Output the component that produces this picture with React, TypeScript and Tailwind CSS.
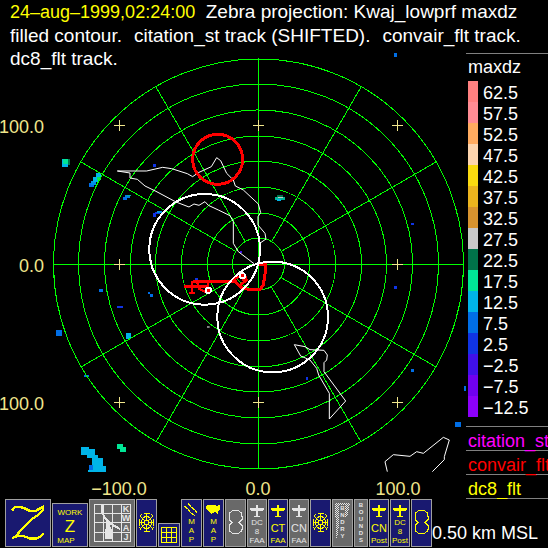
import clsx from 'clsx';
import type { ReactNode } from 'react';

const levels = [
  { value: '62.5', color: 'bg-[#ff8080]' },
  { value: '57.5', color: 'bg-[#ff8c94]' },
  { value: '52.5', color: 'bg-[#ffab60]' },
  { value: '47.5', color: 'bg-[#fdd5ae]' },
  { value: '42.5', color: 'bg-[#fada10]' },
  { value: '37.5', color: 'bg-[#ebb41e]' },
  { value: '32.5', color: 'bg-[#d7932f]' },
  { value: '27.5', color: 'bg-[#c8c8c8]' },
  { value: '22.5', color: 'bg-[#00734a]' },
  { value: '17.5', color: 'bg-[#00e696]' },
  { value: '12.5', color: 'bg-[#00b4e8]' },
  { value: '7.5', color: 'bg-[#006ee6]' },
  { value: '2.5', color: 'bg-[#1034e4]' },
  { value: '−2.5', color: 'bg-[#4010ea]' },
  { value: '−7.5', color: 'bg-[#7000f0]' },
  { value: '−12.5', color: 'bg-[#8c00fa]' },
];

const tracks = [
  { name: 'citation_st', color: 'text-[#ff00ff]' },
  { name: 'convair_flt', color: 'text-[#ff0000]' },
  { name: 'dc8_flt', color: 'text-[#ffff00]' },
];

const rings = [26, 51, 77, 103, 128, 154, 180, 205];
const spokes = [30, 60, 120, 150, 210, 240, 300, 330];

const ticks = [
  [119, 125], [258, 125], [397, 125],
  [119, 264], [397, 264],
  [119, 402], [258, 402], [397, 402],
];

// x, y, width, height, fill (sweep units, a third of a plot unit)
const echoes: [number, number, number, number, string][] = [
  [1032, 9, 9, 12, '#006ee6'],
  [36, 328, 18, 22, '#00b4e8'],
  [40, 326, 16, 16, '#00e696'],
  [54, 327, 6, 18, '#00734a'],
  [309, 342, 9, 9, '#1034e4'],
  [118, 400, 14, 10, '#006ee6'],
  [123, 392, 15, 12, '#0090e8'],
  [130, 382, 14, 14, '#00b4e8'],
  [137, 370, 16, 20, '#00b4e8'],
  [142, 380, 10, 9, '#00e65a'],
  [220, 441, 12, 8, '#006ee6'],
  [225, 436, 14, 9, '#0080e0'],
  [232, 435, 10, 4, '#00b4a0'],
  [310, 488, 8, 12, '#1034e4'],
  [315, 485, 14, 6, '#1034e4'],
  [322, 484, 13, 5, '#0090e0'],
  [676, 440, 30, 9, '#00b496'],
  [682, 435, 18, 6, '#00734a'],
  [684, 440, 14, 5, '#c8c8c8'],
  [680, 447, 14, 5, '#00b4e8'],
  [1083, 519, 9, 6, '#1034e4'],
  [570, 604, 6, 6, '#4010ea'],
  [435, 684, 9, 8, '#1034e4'],
  [1032, 708, 9, 9, '#1034e4'],
  [148, 718, 11, 7, '#006ee6'],
  [294, 726, 7, 6, '#006ee6'],
  [299, 732, 10, 9, '#006ee6'],
  [201, 768, 17, 5, '#1034e4'],
  [18, 840, 18, 18, '#006ee6'],
  [228, 849, 15, 18, '#00b4e8'],
  [103, 975, 14, 6, '#006ee6'],
  [1083, 957, 9, 9, '#006ee6'],
  [768, 981, 6, 9, '#1034e4'],
  [1242, 1008, 6, 15, '#006ee6'],
  [1215, 1116, 18, 15, '#006ee6'],
  [201, 1182, 18, 14, '#00e696'],
  [210, 1190, 18, 15, '#00e696'],
  [93, 1191, 24, 24, '#00b4e8'],
  [111, 1197, 24, 27, '#00b4e8'],
  [126, 1215, 18, 50, '#00b4e8'],
  [140, 1224, 18, 41, '#00b4e8'],
  [156, 1248, 12, 17, '#00b4e8'],
  [114, 1260, 16, 5, '#00b4e8'],
  [117, 1245, 12, 14, '#006ee6'],
];

function Plot() {
  return (
    <svg
      viewBox="0 50 466 448"
      className="block h-auto w-full"
      role="img"
      aria-label="Kwaj_lowprf maxdz filled contour with aircraft tracks"
      shapeRendering="crispEdges"
      fill="none"
    >
      <g transform="translate(50 50) scale(0.33333)">
        {echoes.map(([x, y, w, h, fill]) => (
          <rect key={`${x}-${y}`} x={x} y={y} width={w} height={h} fill={fill} />
        ))}
      </g>

      {/* range rings */}
      <g stroke="#00ff00">
        {rings.map((r) => (
          <circle key={r} cx="258.5" cy="264" r={r} />
        ))}
        {spokes.map((deg) => (
          <path
            key={deg}
            d="M284.500 264.500H463.500"
            transform={`rotate(${deg} 258.500 264.500)`}
          />
        ))}
        <path d="M53 264.500H464M258.500 58V469" />
      </g>

      <g stroke="#f0e68c">
        {ticks.map(([x, y]) => (
          <path key={`${x}-${y}`} d={`M${x - 5} ${y}.5h11M${x}.5 ${y - 5}v11`} />
        ))}
      </g>

      <g transform="translate(50 50) scale(0.33333)" strokeLinejoin="round">
        {/* atoll outlines */}
        <g stroke="#fff" strokeWidth="3">
          <path d="M202 363L240 369V384L262 388L285 408L318 424L378 456L417 471L432 462L447 466L465 455L475 466L505 480L540 497L550 515V580L565 605L612 641" />
          <path d="M202 363H290L338 352L365 356L412 371L428 380L445 368L484 350L500 323L512 332L530 370L550 390L556 408L580 420L625 462L632 488L624 500V525L645 550L648 567L632 578" />
          <path d="M733 884L765 890L780 899L822 901L832 915L830 930L822 938V965L887 1053L838 1107V1030L806 975L800 955L780 930L752 918Z" />
          <path d="M1012 1265L1005 1235L1030 1214L1080 1219L1100 1205L1120 1210L1180 1162L1198 1170L1183 1220V1229L1147 1265" />
          <path d="M471 831h8" />
        </g>

        <g stroke="#ff0000" strokeWidth="9">
          <circle cx="503" cy="328" r="75" />
          <path d="M626 642L648 644L646 665L640 705L630 719L590 717L572 712L555 693L475 696L430 694" />
          <path d="M402 710H475M426 692V732M417 729H435M442 697L447 716L465 725M475 690V718" strokeWidth="7" />
          <path d="M550 690L575 675L580 690L586 678L590 692L575 700L572 712" strokeWidth="7" />
        </g>

        <g stroke="#fff" strokeWidth="6">
          <circle cx="464" cy="598" r="166" />
          <circle cx="668" cy="801" r="166" />
          <circle cx="577" cy="677" r="8" fill="#ff0000" />
          <circle cx="475" cy="721" r="8" fill="#ff0000" />
        </g>
      </g>

      <g fill="#f0e68c" fontSize="18">
        <g textAnchor="end">
          <text x="44" y="133">100.0</text>
          <text x="44" y="272">0.0</text>
          <text x="44" y="410">100.0</text>
        </g>
        <g textAnchor="middle">
          <text x="119" y="495">−100.0</text>
          <text x="258" y="495">0.0</text>
          <text x="398" y="495">100.0</text>
        </g>
      </g>
    </svg>
  );
}

function Legend() {
  return (
    <aside className="w-[82px] shrink-0 overflow-hidden pt-[3px] whitespace-nowrap">
      <h2 className="h-7 border-t border-[#808080] pl-0.5 leading-[27px]">
        maxdz
      </h2>
      <ul>
        {levels.map(({ value, color }) => (
          <li key={value} className="flex h-[21px] gap-[5px] pl-0.5">
            <span className={clsx('w-2.5', color)} />
            <span className="leading-6">{value}</span>
          </li>
        ))}
      </ul>
      <ul className="mt-[9px] border-b border-[#808080]">
        {tracks.map(({ name, color }) => (
          <li
            key={name}
            className={clsx(
              'h-6 border-t border-[#808080] pl-0.5 leading-7',
              color,
            )}
          >
            {name}
          </li>
        ))}
      </ul>
    </aside>
  );
}

function Tool({
  label,
  size = 'h-12 w-5',
  off,
  children,
}: {
  label: string;
  size?: string;
  off?: boolean;
  children: ReactNode;
}) {
  return (
    <button
      type="button"
      aria-label={label}
      className={clsx(
        'flex shrink-0 flex-col items-center overflow-hidden border border-[#a0a0a0]',
        size,
        off ? 'bg-[#696969] text-[#e6e6e6]' : 'bg-[#191970] text-[#ffff00]',
      )}
    >
      {children}
    </button>
  );
}

function RadarIcon() {
  return (
    <svg
      viewBox="0 0 19 46"
      className="h-[46px] w-[19px]"
      fill="none"
      stroke="currentColor"
      shapeRendering="crispEdges"
    >
      <path d="M6.500 13.500h6M4.500 14.500l-2 3M14.500 14.500l2 3M6.500 31.500h6M4.500 30.500l-2-3M14.500 30.500l2-3M2.500 19v7M16.500 19v7" />
      <ellipse cx="9.500" cy="22.500" rx="5" ry="6" />
      <circle cx="9.500" cy="22.500" r="2" />
      <path d="M2 22.500h5M12 22.500h5M9.500 14v6M9.500 25v6M3 16l5 5M16 16l-5 5M3 29l5-5M16 29l-5-5" />
    </svg>
  );
}

function EightIcon() {
  return (
    <svg
      viewBox="0 0 19 46"
      className="h-[46px] w-[19px]"
      fill="none"
      stroke="currentColor"
      shapeRendering="crispEdges"
    >
      <path d="M7 10.500h5l3 2 1 4v3l-3 3 3 3v4l-1 2-3 2H7l-3-2-1-2v-4l3-3-3-3v-3l1-4z" />
    </svg>
  );
}

function PlaneIcon() {
  return (
    <svg
      viewBox="0 0 18 18"
      className="h-[18px] w-[18px] shrink-0"
      fill="currentColor"
      shapeRendering="crispEdges"
    >
      <path d="M8 5h2v3h6v2h-1v1h-5v5h2v1H6v-1h2v-5H3v-1H2V8h6z" />
    </svg>
  );
}

function Stacked({ text, className }: { text: string; className: string }) {
  return (
    <span className={clsx('flex flex-col items-center', className)}>
      {text.split('').map((letter, i) => (
        <span key={i}>{letter}</span>
      ))}
    </span>
  );
}

function Toolbar() {
  return (
    <nav className="flex shrink-0 items-end gap-px" aria-label="Displays">
      <Tool label="Zebra" size="h-12 w-[46px]">
        <svg
          viewBox="18 28 132 138"
          className="h-[46px] w-11"
          fill="none"
          stroke="currentColor"
          strokeWidth="7"
          shapeRendering="crispEdges"
        >
          <path d="M36 60L42 51L54 48L70 51L88 60H108L128 49V60L118 70L98 84L76 104L60 120L46 142M36 144L48 136L66 135L92 144L110 143L122 138L131 128" />
        </svg>
      </Tool>
      <Tool label="Work Z map" size="h-11 w-9">
        <span className="mt-1 text-[8px] leading-[9px]">WORK</span>
        <span className="text-[17px] leading-[19px]">Z</span>
        <span className="mr-2 text-[8px] leading-[9px]">MAP</span>
      </Tool>
      <Tool label="Kwaj" size="h-12 w-[46px]" off>
        <svg viewBox="0 0 44 46" className="h-[46px] w-11" shapeRendering="crispEdges">
          <path
            d="M4.500 4.500h36v37h-36zM13.500 4.500v37M22.500 4.500v37M31.500 4.500v37M4.500 13.500h36M4.500 22.500h36M4.500 32.500h36"
            fill="none"
            stroke="#e6e6e6"
          />
          <path d="M32 5h8v8h-8zM32 14h8v8h-8zM32 23h8v9h-8zM32 33h8v8h-8z" fill="#696969" />
          <path d="M16 21h4v5l3 6v7h-8v-7l1-6z" fill="#e6e6e6" />
          <path d="M12 5v7l3 6 6 6 9 5" fill="none" stroke="#e6e6e6" strokeWidth="2" />
          <g fill="#e6e6e6" fontSize="9" fontWeight="700" textAnchor="middle">
            <text x="36" y="12">K</text>
            <text x="36" y="21">W</text>
            <text x="36" y="31">A</text>
            <text x="36" y="40">J</text>
          </g>
        </svg>
      </Tool>
      <Tool label="Radar" size="h-12 w-[21px]">
        <RadarIcon />
      </Tool>
      <Tool label="Grid" size="h-6 w-[22px]">
        <svg
          viewBox="0 0 20 22"
          className="h-[22px] w-5"
          fill="none"
          stroke="currentColor"
          shapeRendering="crispEdges"
        >
          <path d="M2.500 3.500h15v15h-15zM7.500 3.500v15M12.500 3.500v15M2.500 8.500h15M2.500 13.500h15" />
        </svg>
      </Tool>
      <Tool label="Track map" size="h-12 w-[21px]">
        <svg
          viewBox="0 0 19 17"
          className="h-[17px] w-[19px] shrink-0"
          fill="none"
          stroke="currentColor"
          shapeRendering="crispEdges"
        >
          <path d="M2 6l4 3 3 4 4 3M6 3l3 4 4 3 2 3" />
        </svg>
        <Stacked text="MAP" className="text-[8px] leading-[9px]" />
      </Tool>
      <Tool label="US map" size="h-12 w-[21px]">
        <svg
          viewBox="0 0 19 17"
          className="h-[17px] w-[19px] shrink-0"
          fill="currentColor"
          shapeRendering="crispEdges"
        >
          <path d="M3 5h8l1 1 4-1v4l-2 2v3h-1l-1-2-4 1-1 1-1-2-2-1-2-3V6z" />
        </svg>
        <Stacked text="MAP" className="text-[8px] leading-[9px]" />
      </Tool>
      <Tool label="Figure eight off" size="h-12 w-[21px]" off>
        <EightIcon />
      </Tool>
      <Tool label="DC8 FAA" off>
        <PlaneIcon />
        <span className="text-[8px] leading-[9px]">DC</span>
        <span className="text-[8px] leading-[9px]">8</span>
        <span className="text-[8px] leading-[9px]">FAA</span>
      </Tool>
      <Tool label="CT FAA">
        <PlaneIcon />
        <span className="mt-0.5 text-[11px] leading-4">CT</span>
        <span className="text-[8px] leading-[9px]">FAA</span>
      </Tool>
      <Tool label="CN FAA" off>
        <PlaneIcon />
        <span className="mt-0.5 text-[11px] leading-4">CN</span>
        <span className="text-[8px] leading-[9px]">FAA</span>
      </Tool>
      <Tool label="Radar overlay" size="h-12 w-[21px]">
        <RadarIcon />
      </Tool>
      <Tool label="Boundary" size="h-12 w-[21px]" off>
        <span className="relative flex h-full w-full justify-center">
          <svg
            viewBox="0 0 19 46"
            className="absolute inset-0 h-[46px] w-[19px]"
            shapeRendering="crispEdges"
          >
            <defs>
              <pattern id="dots" width="2" height="2" patternUnits="userSpaceOnUse">
                <path d="M0 0h1v1H0zM1 1h1v1H1z" fill="#e6e6e6" />
              </pattern>
            </defs>
            <path
              d="M2 3h4v23l-1 6-1 7H3V18H2zM12 3h5l-1 5-1 6-3 4zM6 3h6v2H6z"
              fill="url(#dots)"
            />
          </svg>
          <Stacked
            text="BNDRY"
            className="relative mt-[5px] text-[6px] leading-[7px] font-bold"
          />
        </span>
      </Tool>
      <Tool label="Bounds" size="h-12 w-3.5" off>
        <Stacked text="BOUNDS" className="mt-0.5 text-[6px] leading-[7px] font-bold" />
      </Tool>
      <Tool label="CN Post">
        <PlaneIcon />
        <span className="mt-0.5 text-[11px] leading-4">CN</span>
        <span className="text-[8px] leading-[9px]">Post</span>
      </Tool>
      <Tool label="DC8 Post">
        <PlaneIcon />
        <span className="text-[8px] leading-[9px]">DC</span>
        <span className="text-[8px] leading-[9px]">8</span>
        <span className="text-[8px] leading-[9px]">Post</span>
      </Tool>
      <Tool label="Figure eight" size="h-12 w-[21px]">
        <EightIcon />
      </Tool>
    </nav>
  );
}

export default function App() {
  return (
    <div className="min-h-screen overflow-hidden bg-black font-['Liberation_Sans',Arial,sans-serif] text-[18px] text-white">
      <header className="h-[70px] pl-2.5 text-[19px] leading-[23px] whitespace-pre">
        <p>
          <time className="text-[18px] text-[#ffff00]">24–aug–1999,02:24:00</time>
          {'  '}Zebra projection: Kwaj_lowprf maxdz
        </p>
        <p className="flex gap-3">
          <span>filled contour.</span>
          <span>citation_st track (SHIFTED).</span>
          <span>convair_flt track.</span>
        </p>
        <p>dc8_flt track.</p>
      </header>

      <main className="-mt-5 flex items-start">
        <div className="min-w-0 flex-1">
          <Plot />
        </div>
        <Legend />
      </main>

      <footer className="flex items-end pl-[5px]">
        <Toolbar />
        <p className="leading-7 whitespace-nowrap">0.50 km MSL</p>
      </footer>
    </div>
  );
}
